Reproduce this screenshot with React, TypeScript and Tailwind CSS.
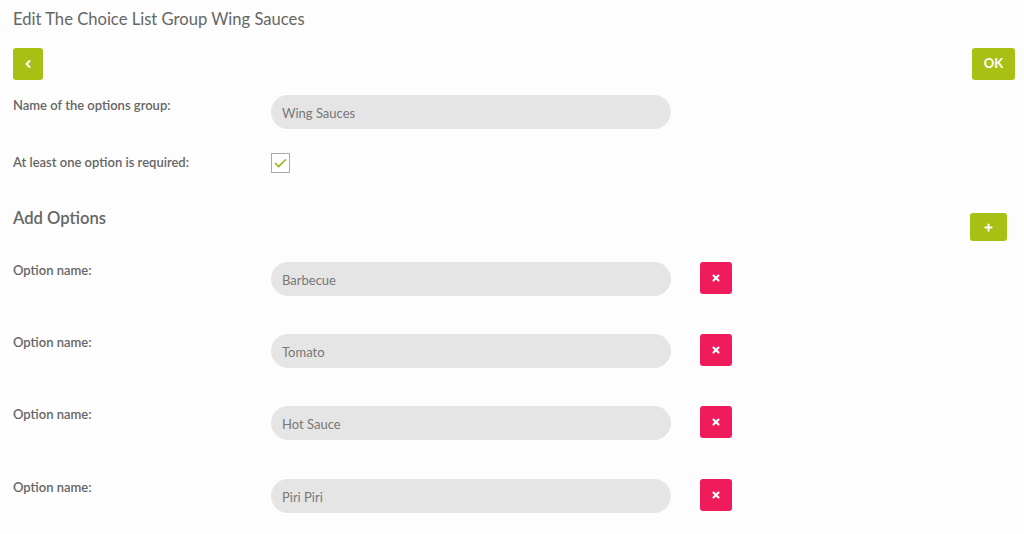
import { Check, ChevronLeft, Plus, X } from 'lucide-react';

const options = ['Barbecue', 'Tomato', 'Hot Sauce', 'Piri Piri'];

export default function App() {
	return (
		<div
			className="min-h-[534px] w-full bg-[#fdfdfd] text-[#666] px-[13px] pt-[9px]"
			style={{ fontFamily: 'Lato, "Open Sans", sans-serif' }}
		>
			{/* TITLE */}
			<h1 className="text-[16.6px] leading-[20px] text-[#666]">Edit The Choice List Group Wing Sauces</h1>

			{/* TOP BUTTONS */}
			<div className="flex justify-between items-start mt-[19px] mr-[-4px]">
				<button className="w-[30px] h-[32px] rounded-[3px] bg-[#a8c013] text-white flex items-center justify-center">
					<ChevronLeft size={12} strokeWidth={4} />
				</button>
				<button className="w-[43px] h-[32px] rounded-[3px] bg-[#a8c013] text-white text-[13px] font-bold">
					OK
				</button>
			</div>

			{/* GROUP NAME */}
			<div className="flex mt-[15px]">
				<div className="w-[258px] text-[13px] font-semibold pt-[1px]">Name of the options group:</div>
				<div className="w-[400px] h-[34px] rounded-full bg-[#e5e5e5] flex items-center px-[11px] pt-[3px] text-[13px] text-[#777]">
					Wing Sauces
				</div>
			</div>

			{/* REQUIRED */}
			<div className="flex mt-[24px] items-center">
				<div className="w-[258px] text-[13px] font-semibold">At least one option is required:</div>
				<div className="w-[19px] h-[20px] border border-[#aaa] bg-white flex items-center justify-center text-[#94b818]">
					<Check size={15} strokeWidth={2.5} />
				</div>
			</div>

			{/* ADD OPTIONS */}
			<div className="flex justify-between items-start mt-[35px] pr-[4px]">
				<h2 className="text-[16.6px] leading-[20px] font-semibold text-[#666]">Add Options</h2>
				<button className="mt-[5px] w-[37px] h-[28px] rounded-[3px] bg-[#a8c013] text-white flex items-center justify-center">
					<Plus size={11} strokeWidth={4} />
				</button>
			</div>

			<div className="flex flex-col gap-[38px] mt-[21px]">
				{options.map((name, i) => (
					<div key={name} className={`flex items-start ${i == 3 ? 'mt-[1px]' : ''}`}>
						<div className="w-[258px] text-[13px] font-semibold mt-[-1px]">Option name:</div>
						<div className="w-[400px] h-[34px] rounded-full bg-[#e5e5e5] flex items-center px-[11px] pt-[3px] text-[13px] text-[#777]">
							{name}
						</div>
						<button className="ml-[29px] w-[32px] h-[32px] rounded-[3px] bg-[#f01b5a] text-white flex items-center justify-center">
							<X size={10} strokeWidth={5} />
						</button>
					</div>
				))}
			</div>
		</div>
	);
}
